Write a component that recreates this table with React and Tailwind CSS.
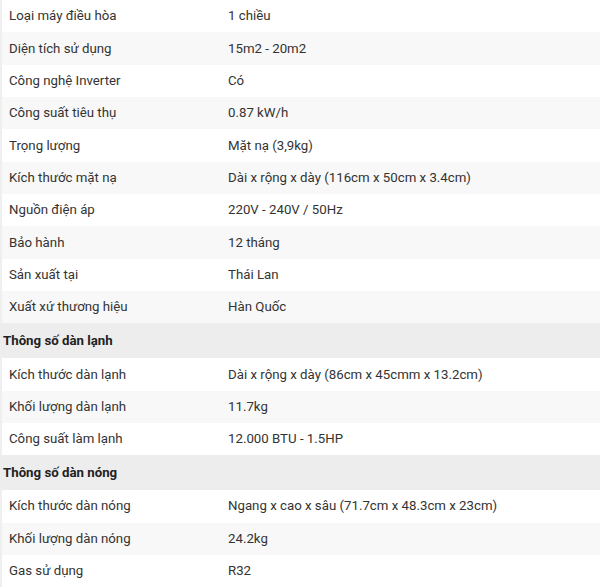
const general = [
  ['Loại máy điều hòa', '1 chiều'],
  ['Diện tích sử dụng', '15m2 - 20m2'],
  ['Công nghệ Inverter', 'Có'],
  ['Công suất tiêu thụ', '0.87 kW/h'],
  ['Trọng lượng', 'Mặt nạ (3,9kg)'],
  ['Kích thước mặt nạ', 'Dài x rộng x dày (116cm x 50cm x 3.4cm)'],
  ['Nguồn điện áp', '220V - 240V / 50Hz'],
  ['Bảo hành', '12 tháng'],
  ['Sản xuất tại', 'Thái Lan'],
  ['Xuất xứ thương hiệu', 'Hàn Quốc'],
]

const indoor = [
  ['Kích thước dàn lạnh', 'Dài x rộng x dày (86cm x 45cmm x 13.2cm)'],
  ['Khối lượng dàn lạnh', '11.7kg'],
  ['Công suất làm lạnh', '12.000 BTU - 1.5HP'],
]

const outdoor = [
  ['Kích thước dàn nóng', 'Ngang x cao x sâu (71.7cm x 48.3cm x 23cm)'],
  ['Khối lượng dàn nóng', '24.2kg'],
  ['Gas sử dụng', 'R32'],
]

function Row({ label, value, odd }) {
  return (
    <div
      className={`grid grid-cols-[219px_1fr] items-center h-[32.33px] border-l-2 border-[#efefef] ${
        odd ? 'bg-[#f8f8f8]' : 'bg-white'
      }`}
    >
      <div className="pl-[7px]">{label}</div>
      <div className="pl-[7px]">{value}</div>
    </div>
  )
}

function Section({ title }) {
  return (
    <div className="h-[35px] flex items-center bg-[#ededed] pl-[3px] font-bold text-[#222]">
      {title}
    </div>
  )
}

export default function App() {
  return (
    <div
      className="w-[600px] h-[588px] overflow-hidden bg-white text-[13.25px] text-[#333]"
      style={{ fontFamily: 'Roboto, "Liberation Sans", sans-serif' }}
    >
      {general.map(([l, v], i) => (
        <Row key={l} label={l} value={v} odd={i % 2 === 1} />
      ))}
      <Section title="Thông số dàn lạnh" />
      {indoor.map(([l, v], i) => (
        <Row key={l} label={l} value={v} odd={i % 2 === 1} />
      ))}
      <Section title="Thông số dàn nóng" />
      {outdoor.map(([l, v], i) => (
        <Row key={l} label={l} value={v} odd={i % 2 === 1} />
      ))}
    </div>
  )
}
